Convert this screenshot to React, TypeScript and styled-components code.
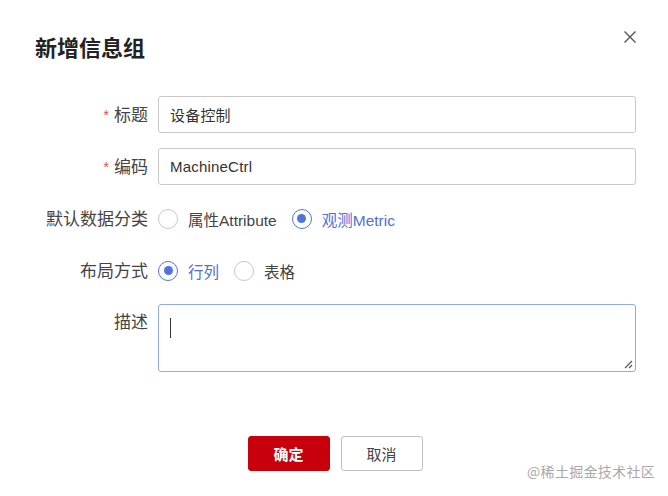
import React from 'react';
import styled, { createGlobalStyle } from 'styled-components';

const GlobalStyle = createGlobalStyle`
	html, body {
		margin: 0;
		padding: 0;
		background: #fff;
	}
	body {
		font-family: 'Liberation Sans', 'Noto Sans CJK SC', sans-serif;
		color: #333;
	}
`;

const Dialog = styled.div`
	position: relative;
	width: 668px;
	height: 496px;
	box-sizing: border-box;
	padding: 36px 32px 0 32px;
	background: #fff;
`;

const Header = styled.div`
	display: flex;
	justify-content: space-between;
	align-items: flex-start;
	height: 60px;
`;

const Title = styled.h2`
	margin: 0 0 0 3px;
	font-size: 22px;
	line-height: 26px;
	font-weight: 700;
	color: #222;
`;

const CloseButton = styled.button`
	border: none;
	background: none;
	padding: 0;
	margin-top: -5px;
	width: 12px;
	height: 12px;
	cursor: pointer;
	display: flex;
`;

const Form = styled.div`
	display: grid;
	grid-template-columns: 116px 1fr;
	column-gap: 10px;
	row-gap: 15px;
`;

const Label = styled.div<{ $top?: boolean }>`
	display: flex;
	justify-content: flex-end;
	align-items: ${(p) => (p.$top ? 'flex-start' : 'center')};
	height: ${(p) => (p.$top ? 'auto' : '37px')};
	line-height: 37px;
	font-size: 17px;
	color: #444;
	white-space: nowrap;
	padding-top: ${(p) => (p.$top ? '0' : '2px')};
	box-sizing: border-box;
`;

const Star = styled.span`
	color: #e34d4d;
	font-size: 14px;
	margin-right: 5px;
`;

const Input = styled.div`
	height: 37px;
	box-sizing: border-box;
	border: 1px solid #c9c9c9;
	border-radius: 3px;
	padding: 0 11px;
	display: flex;
	align-items: center;
	font-size: 15px;
	color: #333;
	letter-spacing: 0.2px;
`;

const RadioGroup = styled.div`
	display: flex;
	align-items: center;
	height: 37px;
	gap: 15px;
`;

const RadioItem = styled.label<{ $checked?: boolean }>`
	display: flex;
	align-items: center;
	gap: 10px;
	font-size: 15.5px;
	color: ${(p) => (p.$checked ? '#4f70d6' : '#444')};
	cursor: pointer;
`;

const RadioCircle = styled.span<{ $checked?: boolean }>`
	width: 20px;
	height: 20px;
	box-sizing: border-box;
	border-radius: 50%;
	border: 1px solid ${(p) => (p.$checked ? '#4f74e0' : '#c4c7cf')};
	display: flex;
	align-items: center;
	justify-content: center;

	&::after {
		content: '';
		width: 9px;
		height: 9px;
		border-radius: 50%;
		background: #4f74e0;
		display: ${(p) => (p.$checked ? 'block' : 'none')};
	}
`;

const TextArea = styled.div`
	position: relative;
	height: 68px;
	box-sizing: border-box;
	border: 1px solid #8ea8ea;
	border-radius: 3px;
	padding: 13px 11px;
`;

const Caret = styled.span`
	display: block;
	width: 1px;
	height: 20px;
	background: #333;
`;

const Resize = styled.svg`
	position: absolute;
	right: 2px;
	bottom: 2px;
`;

const Footer = styled.div`
	display: flex;
	justify-content: center;
	gap: 11px;
	margin-top: 64px;
	padding-left: 2px;
`;

const Button = styled.button<{ $primary?: boolean }>`
	width: 82px;
	height: 35px;
	box-sizing: border-box;
	border-radius: 3px;
	font-family: 'Liberation Sans', 'Noto Sans CJK SC', sans-serif;
	font-size: 15px;
	cursor: pointer;
	border: 1px solid ${(p) => (p.$primary ? '#c8000b' : '#bfbfbf')};
	background: ${(p) => (p.$primary ? '#c8000b' : '#fff')};
	color: ${(p) => (p.$primary ? '#fff' : '#444')};
	font-weight: ${(p) => (p.$primary ? 700 : 400)};
`;

const Watermark = styled.div`
	position: absolute;
	right: 13px;
	bottom: 15px;
	font-size: 14px;
	letter-spacing: 0.3px;
	color: #a9a9a9;
	font-family: 'Noto Sans CJK SC', sans-serif;
`;

const Radio: React.FC<{ label: string; checked?: boolean }> = ({ label, checked }) => (
	<RadioItem $checked={checked}>
		<RadioCircle $checked={checked} />
		{label}
	</RadioItem>
);

export default function App() {
	return (
		<>
			<GlobalStyle />
			<Dialog>
				<Header>
					<Title>新增信息组</Title>
					<CloseButton aria-label="close">
						<svg width="12" height="12" viewBox="0 0 12 12">
							<path d="M0.5 0.5L11.5 11.5M11.5 0.5L0.5 11.5" stroke="#555" strokeWidth="1.4" />
						</svg>
					</CloseButton>
				</Header>
				<Form>
					<Label>
						<Star>*</Star>标题
					</Label>
					<Input>设备控制</Input>

					<Label>
						<Star>*</Star>编码
					</Label>
					<Input>MachineCtrl</Input>

					<Label>默认数据分类</Label>
					<RadioGroup>
						<Radio label="属性Attribute" />
						<Radio label="观测Metric" checked />
					</RadioGroup>

					<Label>布局方式</Label>
					<RadioGroup>
						<Radio label="行列" checked />
						<Radio label="表格" />
					</RadioGroup>

					<Label $top>描述</Label>
					<TextArea>
						<Caret />
						<Resize width="10" height="10" viewBox="0 0 10 10">
							<path d="M9 2L2 9M9 6L6 9" stroke="#555" strokeWidth="1.2" />
						</Resize>
					</TextArea>
				</Form>
				<Footer>
					<Button $primary>确定</Button>
					<Button>取消</Button>
				</Footer>
				<Watermark>@稀土掘金技术社区</Watermark>
			</Dialog>
		</>
	);
}
